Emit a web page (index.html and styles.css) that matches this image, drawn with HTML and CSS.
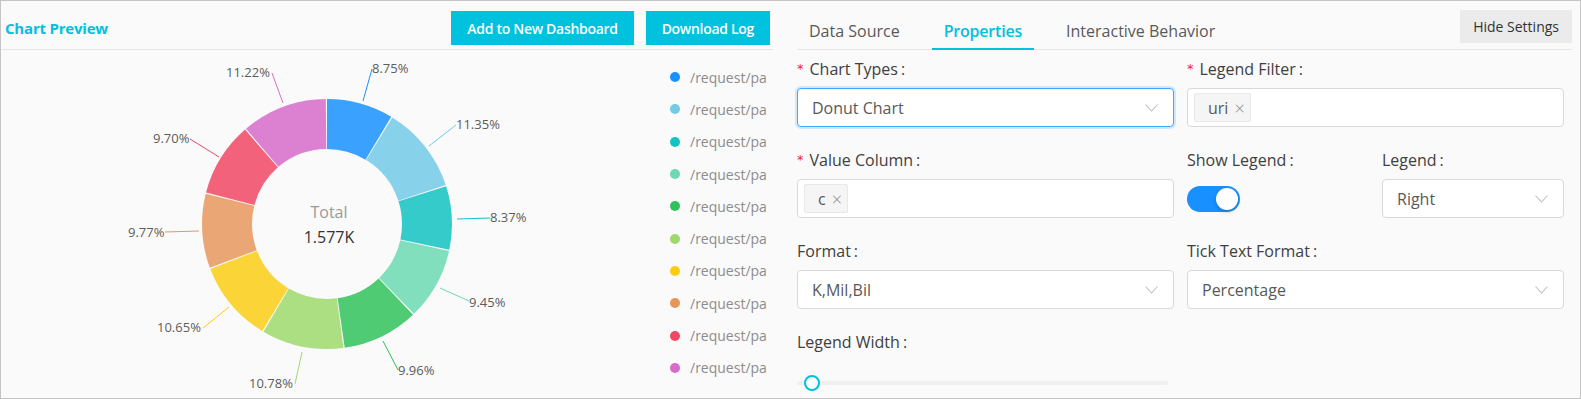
FILE: index.html
```html
<!DOCTYPE html>
<html>
  <head>
    <link rel="stylesheet" href="styles.css">
  </head>
  <body>
    <div class="page">
      <div class="preview">
        <div class="preview-head">
          <span class="preview-title">Chart Preview</span>
          <div class="head-actions">
            <button class="btn-primary">Add to New Dashboard</button>
            <button class="btn-primary">Download Log</button>
          </div>
        </div>
        <div class="preview-body">
          <svg class="donut" width="664" height="348" viewBox="1 50 664 348">
            <g transform="rotate(-90 327 224)" fill="none" stroke-width="50" stroke-opacity="0.85">
              <circle cx="327" cy="224" r="100" pathLength="100" stroke="#1890FF" stroke-dasharray="8.59 100" stroke-dashoffset="0"></circle>
              <circle cx="327" cy="224" r="100" pathLength="100" stroke="#73C9E6" stroke-dasharray="11.19 100" stroke-dashoffset="-8.75"></circle>
              <circle cx="327" cy="224" r="100" pathLength="100" stroke="#13C2C2" stroke-dasharray="8.21 100" stroke-dashoffset="-20.10"></circle>
              <circle cx="327" cy="224" r="100" pathLength="100" stroke="#6CD9B3" stroke-dasharray="9.29 100" stroke-dashoffset="-28.47"></circle>
              <circle cx="327" cy="224" r="100" pathLength="100" stroke="#2FC25B" stroke-dasharray="9.80 100" stroke-dashoffset="-37.92"></circle>
              <circle cx="327" cy="224" r="100" pathLength="100" stroke="#9DD96C" stroke-dasharray="10.62 100" stroke-dashoffset="-47.88"></circle>
              <circle cx="327" cy="224" r="100" pathLength="100" stroke="#FACC14" stroke-dasharray="10.49 100" stroke-dashoffset="-58.66"></circle>
              <circle cx="327" cy="224" r="100" pathLength="100" stroke="#E6965C" stroke-dasharray="9.61 100" stroke-dashoffset="-69.31"></circle>
              <circle cx="327" cy="224" r="100" pathLength="100" stroke="#F04864" stroke-dasharray="9.54 100" stroke-dashoffset="-79.08"></circle>
              <circle cx="327" cy="224" r="100" pathLength="100" stroke="#D66BCA" stroke-dasharray="11.06 100" stroke-dashoffset="-88.78"></circle>
            </g>
            <g stroke-width="1">
              <line x1="363" y1="101" x2="372" y2="69" stroke="#1890FF"></line>
              <line x1="429" y1="146" x2="456" y2="125" stroke="#73C9E6"></line>
              <line x1="457" y1="219" x2="490" y2="218" stroke="#13C2C2"></line>
              <line x1="440" y1="288" x2="469" y2="301" stroke="#6CD9B3"></line>
              <line x1="383" y1="341" x2="398" y2="370" stroke="#2FC25B"></line>
              <line x1="302" y1="352" x2="295" y2="384" stroke="#9DD96C"></line>
              <line x1="229" y1="307" x2="203" y2="328" stroke="#FACC14"></line>
              <line x1="199" y1="231" x2="165" y2="232" stroke="#E6965C"></line>
              <line x1="219" y1="157" x2="190" y2="139" stroke="#F04864"></line>
              <line x1="283" y1="103" x2="272" y2="73" stroke="#D66BCA"></line>
            </g>
            <g class="pct">
              <text x="372" y="72.5">8.75%</text>
              <text x="456" y="128.5">11.35%</text>
              <text x="490" y="221.5">8.37%</text>
              <text x="469" y="307">9.45%</text>
              <text x="398" y="375">9.96%</text>
              <text x="249" y="388">10.78%</text>
              <text x="157" y="332">10.65%</text>
              <text x="128" y="237">9.77%</text>
              <text x="153" y="143">9.70%</text>
              <text x="226" y="77">11.22%</text>
            </g>
            <text class="total-label" x="329" y="218">Total</text>
            <text class="total-value" x="329" y="243">1.577K</text>
          </svg>
          <ul class="legend">
            <li><span class="dot" style="background:#1890FF"></span>/request/path/list</li>
            <li><span class="dot" style="background:#73C9E6"></span>/request/path/query</li>
            <li><span class="dot" style="background:#13C2C2"></span>/request/path/detail</li>
            <li><span class="dot" style="background:#6CD9B3"></span>/request/path/login</li>
            <li><span class="dot" style="background:#2FC25B"></span>/request/path/logout</li>
            <li><span class="dot" style="background:#9DD96C"></span>/request/path/upload</li>
            <li><span class="dot" style="background:#FACC14"></span>/request/path/update</li>
            <li><span class="dot" style="background:#E6965C"></span>/request/path/delete</li>
            <li><span class="dot" style="background:#F04864"></span>/request/path/search</li>
            <li><span class="dot" style="background:#D66BCA"></span>/request/path/status</li>
          </ul>
        </div>
      </div>

      <div class="settings">
        <div class="tabbar">
          <div class="tab">Data Source</div>
          <div class="tab active">Properties</div>
          <div class="tab">Interactive Behavior</div>
          <button class="btn-hide">Hide Settings</button>
        </div>

        <div class="form">
          <div class="item span2">
            <div class="label"><span class="req">*</span><span>Chart Types</span><span class="colon">:</span></div>
            <div class="field select focused">
              <span>Donut Chart</span>
              <svg class="chev" width="13" height="8" viewBox="0 0 13 8"><polyline points="0.5,0.5 6.5,7 12.5,0.5" fill="none" stroke="#bfbfbf" stroke-width="1.1"/></svg>
            </div>
          </div>
          <div class="item span2">
            <div class="label"><span class="req">*</span><span>Legend Filter</span><span class="colon">:</span></div>
            <div class="field tags">
              <span class="tag"><span>uri</span><span class="x">×</span></span>
            </div>
          </div>

          <div class="item span2">
            <div class="label"><span class="req">*</span><span>Value Column</span><span class="colon">:</span></div>
            <div class="field tags">
              <span class="tag"><span>c</span><span class="x">×</span></span>
            </div>
          </div>
          <div class="item">
            <div class="label">Show Legend<span class="colon">:</span></div>
            <div class="switch-row"><span class="switch"><span class="knob"></span></span></div>
          </div>
          <div class="item">
            <div class="label">Legend<span class="colon">:</span></div>
            <div class="field select">
              <span>Right</span>
              <svg class="chev" width="13" height="8" viewBox="0 0 13 8"><polyline points="0.5,0.5 6.5,7 12.5,0.5" fill="none" stroke="#bfbfbf" stroke-width="1.1"/></svg>
            </div>
          </div>

          <div class="item span2">
            <div class="label">Format<span class="colon">:</span></div>
            <div class="field select">
              <span>K,Mil,Bil</span>
              <svg class="chev" width="13" height="8" viewBox="0 0 13 8"><polyline points="0.5,0.5 6.5,7 12.5,0.5" fill="none" stroke="#bfbfbf" stroke-width="1.1"/></svg>
            </div>
          </div>
          <div class="item span2">
            <div class="label">Tick Text Format<span class="colon">:</span></div>
            <div class="field select">
              <span>Percentage</span>
              <svg class="chev" width="13" height="8" viewBox="0 0 13 8"><polyline points="0.5,0.5 6.5,7 12.5,0.5" fill="none" stroke="#bfbfbf" stroke-width="1.1"/></svg>
            </div>
          </div>

          <div class="item span2">
            <div class="label">Legend Width<span class="colon">:</span></div>
            <div class="slider">
              <div class="track"><span class="handle"></span></div>
            </div>
          </div>
        </div>
      </div>
    </div>
  </body>
</html>
```

FILE: styles.css
```css
html, body {
  margin: 0;
  padding: 0;
  background: #fafafa;
  font-family: "Open Sans", "Noto Sans", sans-serif;
}

.page {
  display: flex;
  width: 1581px;
  height: 399px;
  box-sizing: border-box;
  border: 1px solid #c4c4c4;
  background: #fafafa;
  overflow: hidden;
}

/* left: chart preview */
.preview {
  width: 772px;
  flex: none;
}
.preview-head {
  display: flex;
  align-items: center;
  justify-content: space-between;
  height: 49px;
  box-sizing: border-box;
  padding: 6px 3px 0 4px;
  border-bottom: 1px solid #e6e6e6;
}
.preview-title {
  color: #00c1de;
  font-weight: 700;
  font-size: 15px;
  letter-spacing: -0.2px;
}
.head-actions {
  display: flex;
  gap: 12px;
}
.btn-primary {
  height: 34px;
  padding: 0 16px;
  border: none;
  background: #00c1de;
  color: #fff;
  font-family: inherit;
  font-size: 14px;
  font-weight: 600;
  letter-spacing: -0.3px;
}

.preview-body {
  display: flex;
}
.donut {
  display: block;
  flex: none;
}
.pct text {
  font-size: 13px;
  fill: #5c5c5c;
}
.total-label {
  font-size: 16px;
  fill: #999;
  text-anchor: middle;
}
.total-value {
  font-size: 16px;
  fill: #333;
  text-anchor: middle;
}

.legend {
  list-style: none;
  margin: 0;
  padding: 11px 0 0 0;
  width: 102px;
  overflow: hidden;
}
.legend li {
  display: flex;
  align-items: center;
  height: 32.3px;
  white-space: nowrap;
  font-size: 14px;
  color: #8c8c8c;
}
.dot {
  flex: none;
  width: 10px;
  height: 10px;
  border-radius: 50%;
  margin: 0 10px 0 5px;
}

/* right: settings */
.settings {
  flex: 1;
  padding: 0 8px 0 24px;
}
.tabbar {
  display: flex;
  height: 49px;
  box-sizing: border-box;
  border-bottom: 1px solid #e6e6e6;
}
.tab {
  height: 49px;
  box-sizing: border-box;
  margin-bottom: -1px;
  margin-right: 20px;
  padding: 19px 12px 0;
  font-size: 16px;
  line-height: 22px;
  color: #595959;
  border-bottom: 2px solid transparent;
}
.tab.active {
  color: #00c1de;
  font-weight: 600;
  letter-spacing: -0.2px;
  border-bottom-color: #00c1de;
}
.btn-hide {
  margin-left: auto;
  margin-top: 9px;
  height: 33px;
  padding: 0 13px;
  border: none;
  background: #ebebeb;
  color: #333;
  font-family: inherit;
  font-size: 14px;
}

.form {
  display: grid;
  grid-template-columns: repeat(4, 1fr);
  column-gap: 13px;
  padding: 8px 8px 0 0;
}
.item {
  margin-bottom: 22px;
}
.span2 {
  grid-column: span 2;
}
.label {
  display: flex;
  align-items: center;
  height: 22px;
  line-height: 22px;
  margin-bottom: 8px;
  font-size: 16px;
  color: #404040;
  white-space: nowrap;
}
.req {
  color: #f5222d;
  margin-right: 6px;
  font-family: "DejaVu Sans", sans-serif;
  font-size: 13px;
  line-height: 14px;
}
.colon {
  margin-left: 3px;
}

.field {
  display: flex;
  align-items: center;
  height: 39px;
  box-sizing: border-box;
  border: 1px solid #d9d9d9;
  border-radius: 4px;
  background: #fff;
  font-size: 16px;
  color: #595959;
}
.select {
  justify-content: space-between;
  padding: 0 15px 0 14px;
}
.focused {
  border-color: #40a9ff;
  box-shadow: 0 0 0 2px rgba(24, 144, 255, 0.18);
}
.tags {
  padding: 0 6px;
}
.tag {
  display: inline-flex;
  align-items: center;
  gap: 6px;
  height: 29px;
  box-sizing: border-box;
  padding: 0 5px 0 13px;
  background: #f5f5f5;
  border: 1px solid #e8e8e8;
  border-radius: 2px;
  font-size: 16px;
  line-height: 20px;
  color: #595959;
}
.tag .x {
  font-size: 18px;
  line-height: 18px;
  font-weight: 300;
  color: #8c8c8c;
}

.switch-row {
  display: flex;
  align-items: center;
  height: 39px;
}
.switch {
  position: relative;
  display: inline-block;
  width: 53px;
  height: 26px;
  border-radius: 13px;
  background: #1890ff;
}
.knob {
  position: absolute;
  top: 2px;
  right: 2px;
  width: 22px;
  height: 22px;
  border-radius: 50%;
  background: #fff;
  box-shadow: 0 2px 4px rgba(0, 35, 11, 0.2);
}

.slider {
  padding: 20px 6px 0 0;
}
.track {
  position: relative;
  height: 4px;
  border-radius: 2px;
  background: #efefef;
}
.handle {
  position: absolute;
  left: 7px;
  top: -6px;
  width: 12px;
  height: 12px;
  border: 2px solid #00c1de;
  border-radius: 50%;
  background: #fff;
}
```
